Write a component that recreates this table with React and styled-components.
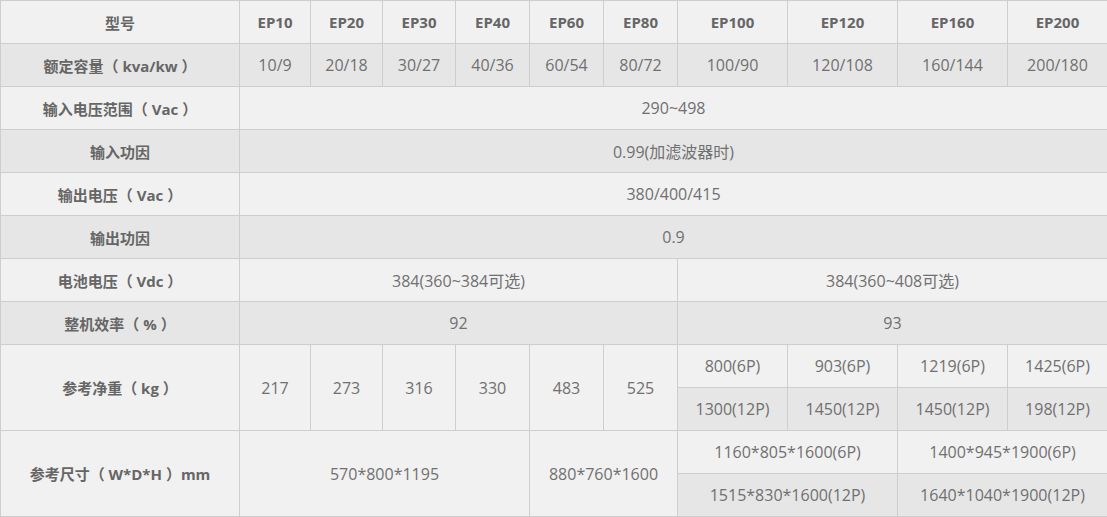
import styled, { createGlobalStyle } from 'styled-components'

const GlobalStyle = createGlobalStyle`
  html, body {
    margin: 0;
    padding: 0;
    background: #fff;
  }
`

const SpecTable = styled.table`
  width: 1107px;
  table-layout: fixed;
  border-collapse: collapse;
  font-family: "Open Sans", "Noto Sans CJK SC", sans-serif;
  color: #666;
  text-align: center;

  tr:nth-child(even) {
    background: #e6e6e6;
  }
`

const Row = styled.tr`
  background: #f1f1f1;
`

const Cell = styled.td`
  height: 42px;
  padding: 0;
  border: 1px solid #cecece;
  vertical-align: middle;
  font-size: ${props => (props.$bold ? '15px' : '16px')};
  font-weight: ${props => (props.$bold ? 700 : 400)};
  color: ${props => (props.$bold ? '#666' : '#707070')};
  white-space: pre;
`

const models = ['EP10', 'EP20', 'EP30', 'EP40', 'EP60', 'EP80', 'EP100', 'EP120', 'EP160', 'EP200']
const capacity = ['10/9', '20/18', '30/27', '40/36', '60/54', '80/72', '100/90', '120/108', '160/144', '200/180']
const colWidths = [239, 71, 72, 73, 74, 74, 74, 110, 110, 110, 100]

// rows where one value covers all ten models
const wideRows = [
  ['输入电压范围（ Vac ）', '290~498'],
  ['输入功因', '0.99(加滤波器时)'],
  ['输出电压（ Vac ）', '380/400/415'],
  ['输出功因', '0.9']
]

function App() {
  return (
    <>
      <GlobalStyle />
      <SpecTable>
        <colgroup>
          {colWidths.map((w, i) => (
            <col key={i} style={{ width: w }} />
          ))}
        </colgroup>
        <tbody>
          <Row>
            <Cell $bold>型号</Cell>
            {models.map(m => (
              <Cell key={m} $bold>{m}</Cell>
            ))}
          </Row>
          <Row>
            <Cell $bold>额定容量（ kva/kw ）</Cell>
            {capacity.map(c => (
              <Cell key={c}>{c}</Cell>
            ))}
          </Row>
          {wideRows.map(([label, value]) => (
            <Row key={label}>
              <Cell $bold>{label}</Cell>
              <Cell colSpan={10}>{value}</Cell>
            </Row>
          ))}
          <Row>
            <Cell $bold>电池电压（ Vdc ）</Cell>
            <Cell colSpan={6}>384(360~384可选)</Cell>
            <Cell colSpan={4}>384(360~408可选)</Cell>
          </Row>
          <Row>
            <Cell $bold>整机效率（ % ）</Cell>
            <Cell colSpan={6}>92</Cell>
            <Cell colSpan={4}>93</Cell>
          </Row>

          {/* Weight */}
          <Row>
            <Cell $bold rowSpan={2}>参考净重（ kg ）</Cell>
            {['217', '273', '316', '330', '483', '525'].map(w => (
              <Cell key={w} rowSpan={2}>{w}</Cell>
            ))}
            {['800(6P)', '903(6P)', '1219(6P)', '1425(6P)'].map(w => (
              <Cell key={w}>{w}</Cell>
            ))}
          </Row>
          <Row>
            {['1300(12P)', '1450(12P)', '1450(12P)', '198(12P)'].map((w, i) => (
              <Cell key={i}>{w}</Cell>
            ))}
          </Row>

          {/* Dimensions */}
          <Row>
            <Cell $bold rowSpan={2}>参考尺寸（ W*D*H ）mm</Cell>
            <Cell rowSpan={2} colSpan={4}>570*800*1195</Cell>
            <Cell rowSpan={2} colSpan={2}>880*760*1600</Cell>
            <Cell colSpan={2}>1160*805*1600(6P)</Cell>
            <Cell colSpan={2}>1400*945*1900(6P)</Cell>
          </Row>
          <Row>
            <Cell colSpan={2}>1515*830*1600(12P)</Cell>
            <Cell colSpan={2}>1640*1040*1900(12P)</Cell>
          </Row>
        </tbody>
      </SpecTable>
    </>
  )
}

export default App
